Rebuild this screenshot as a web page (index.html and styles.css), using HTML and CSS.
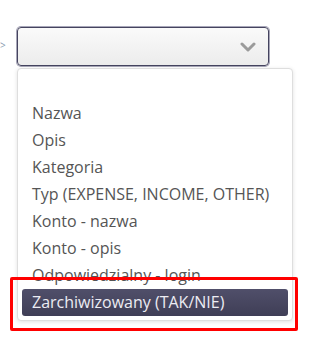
FILE: index.html
```html
<!DOCTYPE html>
<html lang="pl">
<head>
<meta charset="utf-8">
<link rel="stylesheet" href="styles.css">
</head>
<body>
<div class="page">
  <span class="arrow">&gt;</span>
  <div class="field">
    <div class="select">
      <svg class="chevron" width="16" height="10" viewBox="0 0 16 10"><polyline points="2,2 8,8 14,2" fill="none" stroke="#9b9b9b" stroke-width="3" stroke-linecap="round" stroke-linejoin="round"/></svg>
    </div>
    <ul class="menu">
      <li class="opt empty">&nbsp;</li>
      <li class="opt">Nazwa</li>
      <li class="opt">Opis</li>
      <li class="opt">Kategoria</li>
      <li class="opt">Typ (EXPENSE, INCOME, OTHER)</li>
      <li class="opt">Konto - nazwa</li>
      <li class="opt">Konto - opis</li>
      <li class="opt">Odpowiedzialny - login</li>
      <li class="opt active">Zarchiwizowany (TAK/NIE)</li>
    </ul>
  </div>
  <div class="highlight"></div>
</div>
</body>
</html>
```
FILE: styles.css
```css
html, body {
  margin: 0;
  padding: 0;
  background: #fff;
}
body {
  font-family: "Open Sans", "DejaVu Sans", sans-serif;
  width: 314px;
  height: 346px;
  overflow: hidden;
}
.page {
  position: relative;
  display: flex;
  align-items: flex-start;
  padding-top: 27px;
}
.arrow {
  width: 17px;
  margin-top: 10px;
  font-size: 10px;
  line-height: 16px;
  color: #8a9bb0;
}
.field {
  display: flex;
  flex-direction: column;
  width: 276px;
}
.select {
  width: 250px;
  height: 37px;
  border: 1px solid #45445f;
  border-radius: 4px;
  box-shadow: 0 0 0 1px #a7a6b8;
  background: linear-gradient(#fafafa, #ececec);
  display: flex;
  align-items: center;
  justify-content: flex-end;
}
.chevron {
  margin-right: 12px;
  margin-top: 1px;
}
.menu {
  list-style: none;
  margin: 2px 0 0 0;
  padding: 4px;
  width: 266px;
  border: 1px solid #dedede;
  border-radius: 4px;
  background: #fff;
  box-shadow: 0 1px 4px rgba(0,0,0,0.12);
}
.opt {
  height: 27px;
  line-height: 27px;
  padding-left: 10px;
  font-size: 16px;
  color: #555;
  white-space: nowrap;
  border-radius: 3px;
}
.opt.active {
  background: linear-gradient(#504f6a, #3f3e56);
  color: #ececf3;
}
.highlight {
  position: absolute;
  left: 10px;
  top: 277px;
  width: 282px;
  height: 48px;
  border: 3px solid #f00;
  border-radius: 2px;
}
```
